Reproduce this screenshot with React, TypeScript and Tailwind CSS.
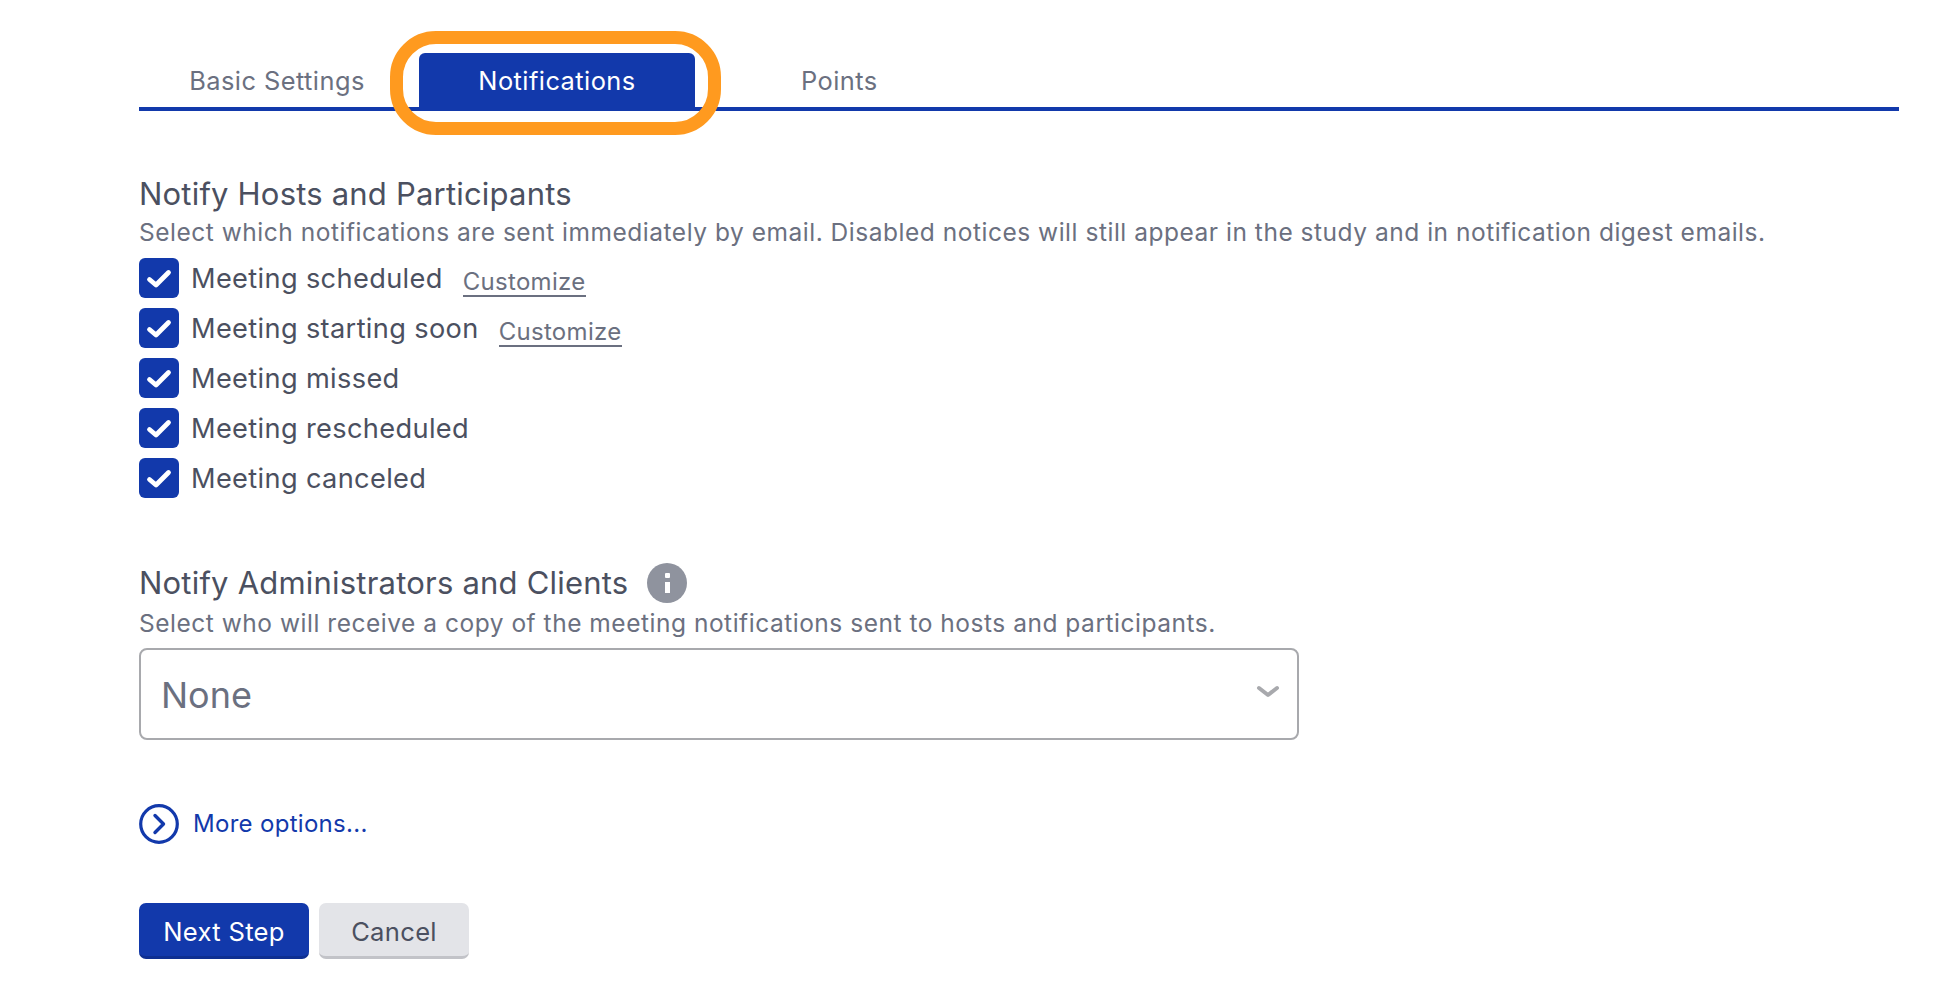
import React from "react";

const font = { fontFamily: "Inter, 'Liberation Sans', sans-serif" };

function Check() {
  return (
    <span className="flex h-10 w-10 shrink-0 items-center justify-center rounded-[6px] bg-[#1239ab]">
      <svg width="40" height="40" viewBox="0 0 40 40" fill="none">
        <path d="M10.5 21.5 L17 27 L29.5 14.5" stroke="#fff" strokeWidth="4.8" strokeLinecap="round" strokeLinejoin="round" />
      </svg>
    </span>
  );
}

function Row({ label, customize }: { label: string; customize?: boolean }) {
  return (
    <div className="flex h-10 items-center">
      <Check />
      <span className="ml-3 mt-[2px] text-[27.2px] leading-10 tracking-[0.35px] text-[#4b5060]">{label}</span>
      {customize && (
        <a className="ml-5 mt-[8px] border-b-2 border-[#6b7080] text-[24px] leading-[27px] tracking-[0.3px] text-[#6b7080]">Customize</a>
      )}
    </div>
  );
}

export default function App() {
  return (
    <div className="h-[1008px] w-[1950px] overflow-hidden bg-white pl-[139px] pr-[51px] pt-[53px]" style={font}>
      <div className="relative flex h-[58px] items-stretch border-b-4 border-[#1239ab]">
        <div className="flex w-[280px] items-center justify-center pt-[2px] text-[25.4px] tracking-[0.45px] text-[#6b7080]">
          <span className="ml-[-4px]">Basic Settings</span>
        </div>
        <div className="-mb-1 flex w-[276px] items-center justify-center rounded-t-[6px] bg-[#1239ab] pb-[2px] text-[25.4px] tracking-[0.45px] text-white">
          Notifications
        </div>
        <div className="ml-[106px] flex items-center pt-[2px] text-[25.4px] tracking-[0.45px] text-[#6b7080]">Points</div>
        <div className="pointer-events-none absolute left-[251px] top-[-22px] h-[104px] w-[331px] rounded-[46px] border-[13px] border-[#ff9a1f]" />
      </div>

      <h2 className="mt-[64px] text-[31px] font-normal leading-[38px] tracking-[0.2px] text-[#4b5060]">Notify Hosts and Participants</h2>
      <p className="mt-[3px] text-[24.5px] leading-[32px] tracking-[0.52px] text-[#6b7080]">
        Select which notifications are sent immediately by email. Disabled notices will still appear in the study and in notification digest emails.
      </p>

      <div className="mt-[10px] flex flex-col gap-[10px]">
        <Row label="Meeting scheduled" customize />
        <Row label="Meeting starting soon" customize />
        <Row label="Meeting missed" />
        <Row label="Meeting rescheduled" />
        <Row label="Meeting canceled" />
      </div>

      <div className="mt-[65px] flex h-[40px] items-center">
        <h2 className="text-[31px] font-normal leading-[38px] tracking-[0.21px] text-[#4b5060]">Notify Administrators and Clients</h2>
        <span className="ml-[19px] flex h-10 w-10 flex-col items-center justify-center rounded-full bg-[#8f939e]">
          <span className="h-[5px] w-[5px] rounded-[1px] bg-white" />
          <span className="mt-[4px] h-[11px] w-[5px] bg-white" />
        </span>
      </div>
      <p className="mt-[4px] text-[24.5px] leading-[32px] tracking-[0.52px] text-[#6b7080]">
        Select who will receive a copy of the meeting notifications sent to hosts and participants.
      </p>

      <div className="mt-[9px] flex h-[92px] w-[1160px] items-center justify-between rounded-[8px] border-2 border-[#a8a9ad] bg-white pl-[20px] pr-[17px]">
        <span className="mt-[2px] text-[36px] text-[#6b7080]">None</span>
        <svg width="24" height="14" viewBox="0 0 24 14" fill="none" className="mb-[4px] ml-[2px]">
          <path d="M3 3 L12 10 L21 3" stroke="#a8a9ad" strokeWidth="4" strokeLinecap="round" strokeLinejoin="round" />
        </svg>
      </div>

      <div className="mt-[64px] flex h-10 items-center">
        <svg width="40" height="40" viewBox="0 0 40 40" fill="none">
          <circle cx="20" cy="20" r="18.3" stroke="#1239ab" strokeWidth="3.2" />
          <path d="M16 11.5 L24.5 20 L16 28.5" stroke="#1239ab" strokeWidth="3.4" strokeLinecap="round" strokeLinejoin="round" />
        </svg>
        <span className="ml-[14px] text-[24px] tracking-[0.3px] text-[#1239ab]">More options...</span>
      </div>

      <div className="mt-[59px] flex gap-[10px]">
        <button className="h-[56px] w-[170px] rounded-[7px] border-b-[3px] border-[#0e2f91] bg-[#1239ab] pt-[5px] text-[25.6px] tracking-[0.3px] text-white">Next Step</button>
        <button className="h-[56px] w-[150px] rounded-[7px] border-b-[3px] border-[#c2c3c8] bg-[#e3e4e8] pt-[5px] text-[25.6px] tracking-[0.3px] text-[#4b5060]">Cancel</button>
      </div>
    </div>
  );
}
